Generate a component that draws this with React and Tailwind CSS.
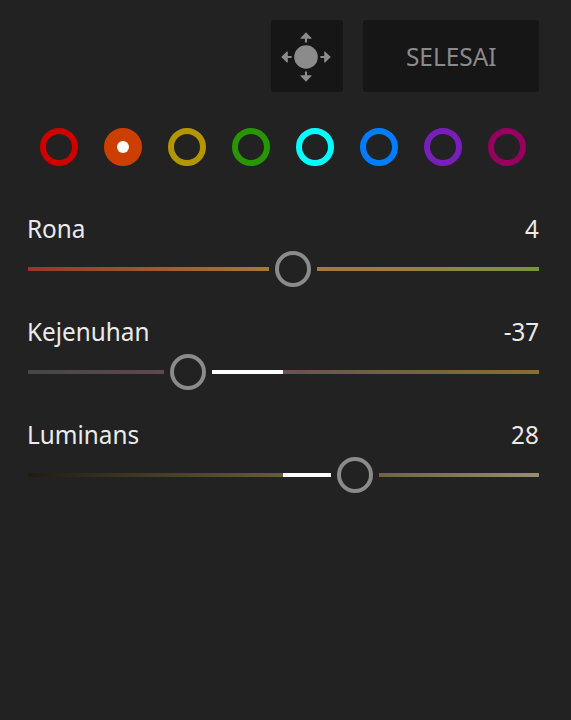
import React, { useState } from "react";

const TRACK_WIDTH = 511;
const KNOB_GAP = 24;

const swatches = [
  { name: "red", ring: "border-[#ce0000]" },
  { name: "orange", ring: "border-[#cd3f00]", fill: "bg-[#cd3f00]" },
  { name: "yellow", ring: "border-[#b49600]" },
  { name: "green", ring: "border-[#289600]" },
  { name: "aqua", ring: "border-[#00ffff]" },
  { name: "blue", ring: "border-[#007dff]" },
  { name: "purple", ring: "border-[#781eb9]" },
  { name: "magenta", ring: "border-[#96005f]" },
];

// knob and origin are pixels from the left end of the track
const sliders = [
  {
    label: "Rona",
    value: "4",
    knob: 265,
    track:
      "bg-[linear-gradient(to_right,#9e3131_0%,#a07b35_46%,#9b8035_70%,#78963a_100%)]",
  },
  {
    label: "Kejenuhan",
    value: "-37",
    knob: 160,
    origin: 255,
    track:
      "bg-[linear-gradient(to_right,#464646_0%,#5f4856_28%,#6a5156_50%,#6e6446_70%,#85702f_100%)]",
  },
  {
    label: "Luminans",
    value: "28",
    knob: 327,
    origin: 255,
    track:
      "bg-[linear-gradient(to_right,#1f1c12_0%,#685c38_50%,#706543_69%,#978d70_100%)]",
  },
];

function TargetIcon() {
  return (
    <svg width="50" height="50" viewBox="0 0 50 50" fill="#8b8b8b">
      <circle cx="25" cy="25" r="11.8" />
      {[0, 90, 180, 270].map((angle) => (
        <path
          key={angle}
          transform={`rotate(${angle} 25 25)`}
          d="M23.9 10.6V6.8H19.5V5.9L25 0.2L30.5 5.9V6.8H26.1V10.6Z"
        />
      ))}
    </svg>
  );
}

function Slider({ knob, origin, track }) {
  const fromLeft = origin < knob;
  const fillStart = fromLeft ? origin : knob + KNOB_GAP;
  const fillEnd = fromLeft ? knob - KNOB_GAP : origin;

  return (
    <div className="relative flex h-9 items-center">
      <div className={`h-1 w-full ${track}`} />
      {origin !== undefined && (
        <div
          className="absolute h-1 bg-white"
          style={{ left: fillStart, width: fillEnd - fillStart }}
        />
      )}
      <div
        className="absolute flex w-12 justify-center bg-[#222222]"
        style={{ left: Math.min(knob, TRACK_WIDTH) - KNOB_GAP }}
      >
        <div className="size-9 rounded-full border-4 border-[#8b8b8b]" />
      </div>
    </div>
  );
}

export default function App() {
  const [active, setActive] = useState("orange");

  return (
    <div className="h-[720px] w-[571px] overflow-hidden bg-[#222222] pt-5 pr-8 pl-7 font-['Noto_Sans','Open_Sans',sans-serif] text-[26px] leading-9 text-[#ebebeb]">
      <div className="flex justify-end gap-5">
        <button className="flex size-[72px] items-center justify-center rounded-[3px] bg-[#161616] pt-0.5 pr-0.5">
          <TargetIcon />
        </button>
        <button className="h-[72px] w-44 rounded-[3px] bg-[#161616] text-[#8b8b8b]">
          <span className="inline-block scale-x-[.94]">SELESAI</span>
        </button>
      </div>

      <div className="mt-9 flex gap-[26px] pl-3">
        {swatches.map((s) => (
          <button
            key={s.name}
            aria-label={s.name}
            onClick={() => setActive(s.name)}
            className={`flex size-[38px] items-center justify-center rounded-full border-6 ${s.ring} ${
              active === s.name ? s.fill || "" : ""
            }`}
          >
            {active === s.name && (
              <span className="size-3 rounded-full bg-white" />
            )}
          </button>
        ))}
      </div>

      <div className="mt-11 flex flex-col gap-[26px]">
        {sliders.map((s) => (
          <div key={s.label}>
            <div className="flex h-[41px] justify-between">
              <span className="-ml-px origin-left scale-x-[.935]">
                {s.label}
              </span>
              <span className="origin-right scale-x-[.93]">{s.value}</span>
            </div>
            <Slider knob={s.knob} origin={s.origin} track={s.track} />
          </div>
        ))}
      </div>
    </div>
  );
}
